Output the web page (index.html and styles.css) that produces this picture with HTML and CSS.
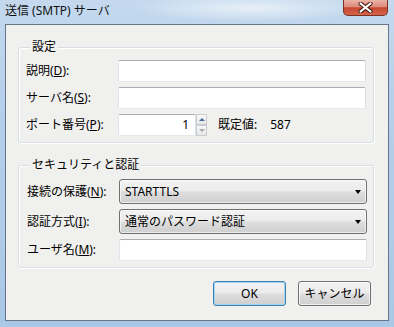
FILE: index.html
```html
<!DOCTYPE html>
<html lang="ja">
<head>
  <meta charset="UTF-8">
  <title>送信 (SMTP) サーバ</title>
  <link rel="stylesheet" href="styles.css">
</head>
<body>
  <div class="window">
    <div class="titlebar">
      <span class="title">送信 (SMTP) サーバ</span>
      <div class="close">
        <svg width="15" height="11" viewBox="0 0 15 11">
          <path d="M2.5 1.5 L12.5 9.5 M12.5 1.5 L2.5 9.5" stroke="#4a1d16" stroke-width="4.2" stroke-linecap="round"/>
          <path d="M2.5 1.5 L12.5 9.5 M12.5 1.5 L2.5 9.5" stroke="#ffffff" stroke-width="2.2" stroke-linecap="round"/>
        </svg>
      </div>
    </div>

    <div class="client">
      <!-- 設定 -->
      <div class="group">
        <div class="group-title">設定</div>
        <div class="row">
          <span class="label">説明(<u>D</u>):</span>
          <span class="field"></span>
        </div>
        <div class="row">
          <span class="label">サーバ名(<u>S</u>):</span>
          <span class="field"></span>
        </div>
        <div class="row">
          <span class="label">ポート番号(<u>P</u>):</span>
          <span class="field port">1</span>
          <span class="spin">
            <span class="spin-btn"><span class="arrow-up"></span></span>
            <span class="spin-btn"><span class="arrow-down"></span></span>
          </span>
          <span class="default-label">既定値:</span>
          <span class="default-value">587</span>
        </div>
      </div>

      <!-- セキュリティと認証 -->
      <div class="group security">
        <div class="group-title">セキュリティと認証</div>
        <div class="row">
          <span class="label">接続の保護(<u>N</u>):</span>
          <span class="select"><span>STARTTLS</span><span class="caret"></span></span>
        </div>
        <div class="row">
          <span class="label">認証方式(<u>I</u>):</span>
          <span class="select"><span>通常のパスワード認証</span><span class="caret"></span></span>
        </div>
        <div class="row">
          <span class="label">ユーザ名(<u>M</u>):</span>
          <span class="field"></span>
        </div>
      </div>

      <div class="buttons">
        <span class="button default">OK</span>
        <span class="button">キャンセル</span>
      </div>
    </div>
  </div>
</body>
</html>
```

FILE: styles.css
```css
body {
  margin: 0;
  font-family: "Noto Sans", "Noto Sans CJK JP", sans-serif;
  font-size: 12px;
  line-height: 16px;
  color: #000000;
}

u {
  text-decoration-thickness: 1px;
  text-underline-offset: 1px;
}

/* ウィンドウ枠 */
.window {
  width: 394px;
  height: 327px;
  display: flex;
  flex-direction: column;
  background:
    radial-gradient(ellipse 120px 14px at 250px 8px, rgba(255, 255, 255, 0.6), rgba(255, 255, 255, 0)),
    linear-gradient(180deg, #c4d9ee 0%, #b6cfea 30%, #a9c8e6 100%);
}

.titlebar {
  height: 24px;
  display: flex;
  justify-content: space-between;
  align-items: flex-start;
  padding: 0 6px 0 5px;
}

.title {
  padding-top: 3px;
  color: #111111;
}

.close {
  width: 45px;
  height: 16px;
  box-sizing: border-box;
  border: 1px solid #7a3227;
  border-top: none;
  border-radius: 0 0 5px 5px;
  background: linear-gradient(180deg, #eab3a7 0%, #dd8b7b 45%, #c7472f 52%, #d5644c 100%);
  display: flex;
  align-items: center;
  justify-content: center;
}

.client {
  flex: 1;
  margin: 0 5px 6px;
  border: 1px solid #66768a;
  background: #f0f0ee;
  padding: 22px 14px 0 12px;
  display: flex;
  flex-direction: column;
}

/* グループボックス */
.group {
  border: 1px solid #d5dfe5;
  border-radius: 3px;
  box-shadow: inset 1px 1px 0 #ffffff, 1px 1px 0 #ffffff;
  padding: 0 7px 6px 7px;
  display: flex;
  flex-direction: column;
  gap: 5px;
}

.group-title {
  align-self: flex-start;
  margin: -9px 0 0 4px;
  padding: 0 2px;
  background: #f0f0ee;
}

.security {
  margin-top: 22px;
  padding: 0 6px 6px 8px;
}

.security .group-title {
  margin-left: 3px;
  margin-bottom: 1px;
}

.row {
  display: flex;
  align-items: center;
}

.label {
  width: 92px;
  flex-shrink: 0;
}

.field {
  flex: 1;
  height: 22px;
  box-sizing: border-box;
  border: 1px solid;
  border-color: #abadb3 #dbdfe6 #e3e9ef #e2e3ea;
  border-radius: 2px;
  background: #ffffff;
}

.field.port {
  flex: 0 0 78px;
  text-align: right;
  padding-right: 6px;
  line-height: 20px;
}

.spin {
  height: 22px;
  width: 11px;
  display: flex;
  flex-direction: column;
}

.spin-btn {
  flex: 1;
  box-sizing: border-box;
  border: 1px solid #c9ccd1;
  background: linear-gradient(180deg, #fafafa, #e6e6e6);
  display: flex;
  align-items: center;
  justify-content: center;
}

.arrow-up {
  border-left: 3px solid transparent;
  border-right: 3px solid transparent;
  border-bottom: 3px solid #4d6c9c;
}

.arrow-down {
  border-left: 3px solid transparent;
  border-right: 3px solid transparent;
  border-top: 3px solid #a7a7a7;
}

.default-label {
  margin-left: 11px;
}

.default-value {
  margin-left: 13px;
}

/* ドロップダウン */
.select {
  flex: 1;
  height: 25px;
  box-sizing: border-box;
  border: 1px solid #707070;
  border-radius: 3px;
  background: linear-gradient(180deg, #f2f2f2 0%, #ebebeb 48%, #dddddd 52%, #cfcfcf 100%);
  box-shadow: inset 0 0 0 1px rgba(255, 255, 255, 0.6);
  display: flex;
  align-items: center;
  justify-content: space-between;
  padding: 0 5px 0 5px;
}

.caret {
  border-left: 3.5px solid transparent;
  border-right: 3.5px solid transparent;
  border-top: 4px solid #000000;
}

/* ボタン */
.buttons {
  display: flex;
  justify-content: flex-end;
  gap: 12px;
  margin-top: 13px;
  padding-right: 3px;
}

.button {
  width: 73px;
  height: 25px;
  box-sizing: border-box;
  border: 1px solid #707070;
  border-radius: 3px;
  background: linear-gradient(180deg, #f2f2f2 0%, #ebebeb 48%, #dddddd 52%, #cfcfcf 100%);
  box-shadow: inset 0 0 0 1px rgba(255, 255, 255, 0.7);
  display: flex;
  align-items: center;
  justify-content: center;
}

.button.default {
  border-color: #3c7fb1;
  box-shadow: inset 0 0 0 1px #9fd6f4;
}
```
